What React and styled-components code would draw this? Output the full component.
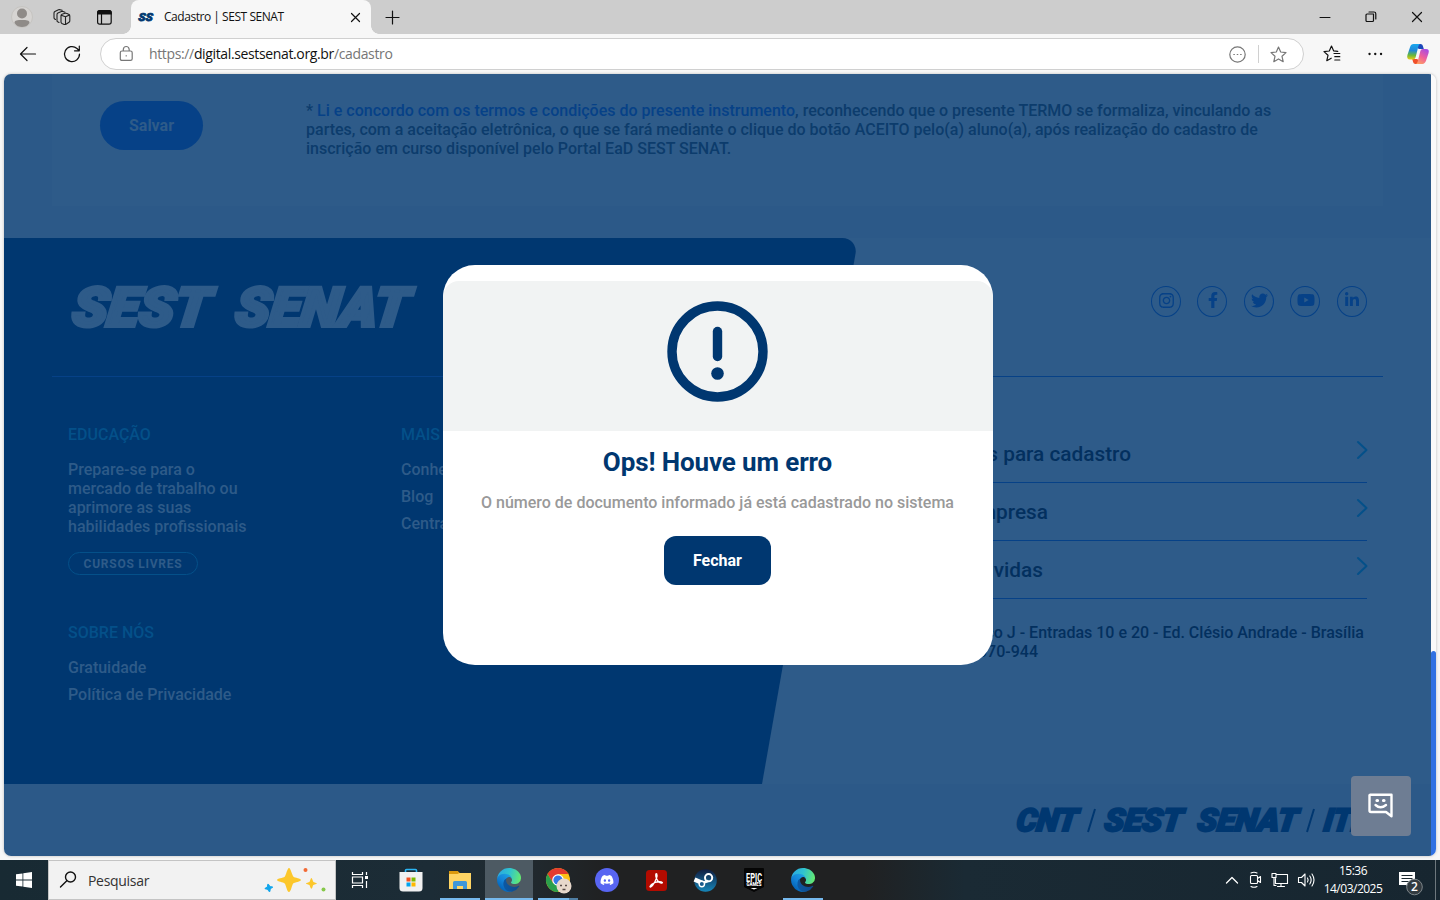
import React from "react";
import styled, { createGlobalStyle } from "styled-components";
import { FaInstagram, FaFacebookF, FaTwitter, FaYoutube, FaLinkedinIn, FaDiscord, FaSteamSymbol } from "react-icons/fa";

const Global = createGlobalStyle`
  * { box-sizing: border-box; }
  body { margin: 0; background: #f7f7f7; overflow: hidden; }
  svg { display: block; flex: none; overflow: visible; }
`;

const ui = `"Open Sans", "Noto Sans", sans-serif`;

const Screen = styled.div`
  width: 1440px;
  height: 900px;
  display: flex;
  flex-direction: column;
  overflow: hidden;
  background: #f7f7f7;
  font-family: Roboto, sans-serif;
`;

/* ---------- browser chrome ---------- */
const TabStrip = styled.header`
  height: 34px;
  background: #cdcdcd;
  display: flex;
  align-items: center;
`;
const StripTools = styled.div`
  width: 131px;
  padding-left: 11px;
  display: flex;
  align-items: center;
  gap: 20px;
  svg:last-child { margin-left: 6px; }
`;
const Tab = styled.div`
  position: relative;
  width: 240px;
  height: 34px;
  padding: 0 9px 0 7px;
  border-radius: 8px 8px 0 0;
  background: #f7f7f7;
  display: flex;
  align-items: center;
  &::before, &::after {
    content: "";
    position: absolute;
    bottom: 0;
    width: 8px;
    height: 8px;
  }
  &::before { left: -8px; background: radial-gradient(circle at 0 0, #cdcdcd 7.5px, #f7f7f7 8px); }
  &::after { right: -8px; background: radial-gradient(circle at 100% 0, #cdcdcd 7.5px, #f7f7f7 8px); }
`;
const TabTitle = styled.span`
  flex: 1;
  margin-left: 9px;
  font: 400 12px/18px ${ui};
  letter-spacing: -0.46px;
  white-space: nowrap;
  color: #111;
`;
const NewTab = styled.div`
  flex: 1;
  padding-left: 14px;
`;
const WindowButtons = styled.div`
  display: flex;
  gap: 34px;
  padding-right: 17px;
`;
const Toolbar = styled.div`
  height: 40px;
  display: flex;
  align-items: center;
  padding: 0 11px 0 19px;
`;
const NavButtons = styled.div`
  width: 81px;
  display: flex;
  gap: 26px;
`;
const AddressBar = styled.div`
  width: 1204px;
  height: 32px;
  border: 1px solid #d0d0d0;
  border-radius: 16px;
  background: #fff;
  display: flex;
  align-items: center;
  padding: 0 16px 0 18px;
`;
const Url = styled.span`
  flex: 1;
  margin-left: 15px;
  font: 400 14px/20px ${ui};
  letter-spacing: -0.36px;
  color: #767676;
  b { font-weight: 400; color: #111; }
`;
const Separator = styled.i`
  width: 1px;
  height: 18px;
  background: #d0d0d0;
  margin: 0 11px 0 12px;
`;
const ToolbarEnd = styled.div`
  flex: 1;
  display: flex;
  align-items: center;
  justify-content: flex-end;
  gap: 27px;
  svg:last-child { margin-left: -3px; }
`;

/* ---------- web page ---------- */
const Viewport = styled.main`
  position: relative;
  width: 1432px;
  height: 782px;
  margin: 0 4px;
  border-radius: 7px;
  overflow: hidden;
  display: flex;
  box-shadow: 0 0 3px rgba(0, 0, 0, 0.25);
`;
const Page = styled.div`
  width: 1427px;
  background: #2c5988;
  display: flex;
  flex-direction: column;
`;
const Scrollbar = styled.div`
  width: 5px;
  background: #fafafa;
  display: flex;
  flex-direction: column;
  justify-content: flex-end;
`;
const Thumb = styled.div`
  height: 205px;
  border-radius: 3px 3px 0 0;
  background: #3071e2;
`;
const FormCard = styled.section`
  width: 1331px;
  height: 132px;
  margin: 0 0 32px 48px;
  padding: 27px 0 0 48px;
  background: #2e5b89;
  display: flex;
  align-items: flex-start;
`;
const SaveButton = styled.button`
  width: 103px;
  height: 49px;
  border: 0;
  border-radius: 25px;
  background: #064187;
  color: #2e5b89;
  font: 700 16px/19px Roboto, sans-serif;
`;
const Terms = styled.p`
  margin: 0 0 0 103px;
  font-weight: 500;
  font-size: 16px;
  line-height: 19px;
  letter-spacing: 0.005px;
  color: #0c3c6c;
  white-space: nowrap;
  a { color: #064187; }
`;
const Footer = styled.footer`
  position: relative;
  height: 546px;
  background: #2e5b89;
  overflow: hidden;
  display: flex;
  flex-direction: column;
  padding: 0 48px;
  &::before {
    content: "";
    position: absolute;
    left: -200px;
    top: 0;
    width: 958px;
    height: 546px;
    background: #003770;
    border-top-right-radius: 16px;
    transform: skewX(-10deg);
    transform-origin: 100% 100%;
  }
  > * { position: relative; }
`;
const FooterTop = styled.div`
  height: 139px;
  padding: 48px 16px 0;
  border-bottom: 1px solid #064187;
  display: flex;
  justify-content: space-between;
`;
const Socials = styled.div`
  display: flex;
  gap: 16.4px;
`;
const Social = styled.span`
  width: 30.2px;
  height: 31px;
  border: 1px solid #064187;
  border-radius: 50%;
  display: flex;
  justify-content: center;
  padding: ${(p) => p.$top || 5}px 0 0 1px;
  color: #064187;
`;
const FooterBody = styled.div`
  display: flex;
  padding-top: 48px;
`;
const LinkColumn = styled.nav`
  width: ${(p) => p.$w}px;
  padding-left: 16px;
  display: flex;
  flex-direction: column;
  align-items: flex-start;
  font-weight: 500;
  font-size: 16px;
  line-height: 19px;
  color: #2e5b89;
  white-space: nowrap;
`;
const Heading = styled.h4`
  margin: ${(p) => p.$mt || 0}px 0 16px;
  font: inherit;
  color: #045089;
`;
const FooterLink = styled.a`
  margin-bottom: 8px;
`;
const Chip = styled.span`
  width: 130px;
  height: 23px;
  margin-top: 8px;
  border: 1px solid #045089;
  border-radius: 12px;
  font-weight: 700;
  font-size: 12px;
  line-height: 22px;
  letter-spacing: 0.75px;
  text-align: center;
`;
const Accordion = styled.div`
  width: 649px;
  font-weight: 500;
  color: #03305f;
`;
const AccordionRow = styled.div`
  height: 58px;
  border-bottom: 1px solid #064187;
  display: flex;
  align-items: flex-end;
  justify-content: space-between;
  padding-bottom: 16px;
  font-size: 20.800px;
  line-height: 24px;
  svg { margin: 0 -1px 6px 0; }
`;
const RightEdge = styled.span`
  display: block;
  width: ${(p) => p.$w}px;
  text-align: right;
  white-space: nowrap;
`;
const Address = styled.address`
  margin-top: 24px;
  font-style: normal;
  font-size: 16px;
  line-height: 19px;
`;
const BrandBar = styled.div`
  height: 72px;
  padding: 20px 0 0 1009px;
`;
const ChatButton = styled.button`
  position: absolute;
  right: 25px;
  bottom: 20px;
  width: 60px;
  height: 60px;
  padding: 0;
  border: 0;
  border-radius: 4px;
  background: #6e7d93;
  display: grid;
  place-items: center;
`;

/* ---------- dialog ---------- */
const Dialog = styled.div`
  position: absolute;
  left: 439px;
  top: 191px;
  width: 550px;
  height: 400px;
  padding-top: 16px;
  border-radius: 32px;
  background: #fff;
  overflow: hidden;
  display: flex;
  flex-direction: column;
`;
const DialogBanner = styled.div`
  height: 150px;
  padding: 20px 1px 0 0;
  border-radius: 16px 16px 0 0;
  background: #f1f3f3;
  display: flex;
  justify-content: center;
`;
const DialogBody = styled.div`
  width: 549px;
  display: flex;
  flex-direction: column;
  align-items: center;
`;
const DialogTitle = styled.h2`
  margin: 15px 0 0;
  font: 700 26px/32px Roboto, sans-serif;
  letter-spacing: -0.12px;
  color: #003770;
`;
const DialogText = styled.p`
  margin: 15px 0 0;
  font: 500 16px/19px Roboto, sans-serif;
  color: #999;
`;
const DialogButton = styled.button`
  width: 107px;
  height: 49px;
  margin-top: 24px;
  border: 0;
  border-radius: 12px;
  background: #003770;
  color: #fff;
  font: 700 16px/19px Roboto, sans-serif;
`;

/* ---------- taskbar ---------- */
const Taskbar = styled.div`
  height: 40px;
  margin-top: 4px;
  background: linear-gradient(90deg, #182a33 0, #1c2c36 30%, #202a30 36%, #202122 42%, #202122 60%, #1a2a34 67%, #172630 100%);
  display: flex;
  color: #fff;
`;
const Cell = styled.div`
  width: ${(p) => p.$w || 49}px;
  height: 40px;
  padding-right: ${(p) => (p.$w ? 0 : 1)}px;
  display: flex;
  align-items: center;
  justify-content: center;
  background:
    ${(p) => {
      const line = p.$split ? "linear-gradient(90deg,#76b9ed 31px,#4f7ea3 31px)" : p.$open ? "linear-gradient(#76b9ed,#76b9ed)" : "linear-gradient(transparent,transparent)";
      return p.$active
        ? `${line} 0 38px / 48px 2px no-repeat, linear-gradient(#4d5a63,#4d5a63) 0 0 / 48px 40px no-repeat`
        : `${line} 4px 38px / 40px 2px no-repeat`;
    }};
`;
const SearchBox = styled.div`
  width: 288px;
  height: 40px;
  border: 1px solid #c4c4c4;
  background: #f2f2f2;
  display: flex;
  align-items: center;
  padding: 0 9px 0 10px;
  font: 400 14px/20px ${ui};
  color: #333;
  span { flex: 1; margin: 2px 0 0 11px; letter-spacing: -0.3px; }
`;
const Tray = styled.div`
  flex: 1;
  display: flex;
  align-items: center;
  justify-content: flex-end;
`;
const TrayIcons = styled.div`
  display: flex;
  align-items: center;
  gap: 8px;
`;
const Clock = styled.div`
  width: 76px;
  text-align: center;
  font: 400 12px/18px ${ui};
  letter-spacing: -0.5px;
`;
const Notifications = styled.div`
  padding: 2px 11px 0 7px;
`;
const DesktopEdge = styled.i`
  width: 5px;
  height: 40px;
  border-left: 1px solid #6d777d;
`;

const Stroke = ({ w, h = w, d, c = "#111", sw = 1.2, vb, ...rest }) => (
  <svg width={w} height={h} viewBox={vb || `0 0 ${w} ${h}`} fill="none" stroke={c} strokeWidth={sw} strokeLinecap="round" strokeLinejoin="round" {...rest}>
    <path d={d} />
  </svg>
);

function LogoWord({ x, y, w, size, children, color, stroke = 0 }) {
  return (
    <text
      transform={`translate(${x} ${y}) skewX(-7)`}
      fontFamily="Roboto, sans-serif"
      fontStyle="italic"
      fontWeight="900"
      fontSize={size}
      textLength={w}
      lengthAdjust="spacingAndGlyphs"
      fill={color}
      stroke={color}
      strokeWidth={stroke}
    >
      {children}
    </text>
  );
}

const EdgeIcon = ({ id }) => (
  <svg width="24" height="24" viewBox="0 0 256 256">
    <defs>
      <linearGradient id={id + "a"} x1="60" y1="177" x2="241" y2="177" gradientUnits="userSpaceOnUse"><stop stopColor="#0c59a4" /><stop offset="1" stopColor="#114a8b" /></linearGradient>
      <linearGradient id={id + "b"} x1="150" y1="100" x2="45" y2="225" gradientUnits="userSpaceOnUse"><stop stopColor="#1b9de2" /><stop offset=".5" stopColor="#1383d8" /><stop offset="1" stopColor="#0464b8" /></linearGradient>
      <linearGradient id={id + "c"} x1="10" y1="60" x2="250" y2="130" gradientUnits="userSpaceOnUse"><stop stopColor="#2aa9e0" /><stop offset=".45" stopColor="#2fc3d0" /><stop offset="1" stopColor="#66eb6e" /></linearGradient>
    </defs>
    <path fill={`url(#${id}a)`} d="M231 190.5c-3.4 1.8-6.9 3.4-10.5 4.7a101.5 101.5 0 0 1-35.9 6.5c-47.3 0-88.5-32.5-88.5-74.3 0-11.4 6.4-21.9 16.4-27.3-42.8 1.8-53.8 46.4-53.8 72.5 0 73.9 68.1 81.4 82.8 81.4 7.9 0 19.8-2.3 27-4.6l1.3-.4a128.3 128.3 0 0 0 66.6-52.8 4 4 0 0 0-5.4-5.7z" />
    <path fill={`url(#${id}b)`} d="M105.7 241.4a79.2 79.2 0 0 1-22.7-21.3 80.7 80.7 0 0 1 29.5-120c3.1-1.5 8.5-4.1 15.6-4 10.1.1 20 5 26.2 13.2a32.5 32.5 0 0 1 6.3 18.9c0-.2 24.5-79.6-80-79.6-43.9 0-80 41.7-80 78.2 0 19.3 4.5 38.4 12.6 55.6a128 128 0 0 0 156.4 67.1 75.5 75.5 0 0 1-63.9-8.1z" />
    <path fill={`url(#${id}c)`} d="M152.3 148.9c-.9 1-3.4 2.5-3.4 5.7 0 2.6 1.7 5.2 4.8 7.3 14.4 10.1 41.7 8.7 41.8 8.7 10.7 0 21.2-2.9 30.5-8.4a61.9 61.9 0 0 0 30.4-53.4c.3-22.4-8-37.3-11.3-43.9C223.9 23.9 177.7 0 128 0A128 128 0 0 0 0 126.2c.5-36.5 36.8-66 80-66 3.5 0 23.5.3 42 10.1 16.4 8.6 25 19 30.9 29.2 6.2 10.7 7.3 24.2 7.3 29.5 0 5.4-2.7 13.3-7.9 19.9z" />
  </svg>
);

const CopilotIcon = () => (
  <svg width="22" height="21" viewBox="0 0 22 21">
    <defs>
      <linearGradient id="cpl" x1="5" y1="0" x2="4" y2="16" gradientUnits="userSpaceOnUse"><stop stopColor="#19a7ee" /><stop offset=".4" stopColor="#2088d8" /><stop offset=".7" stopColor="#68b83c" /><stop offset="1" stopColor="#f8cd12" /></linearGradient>
      <linearGradient id="cpr" x1="19" y1="5" x2="10" y2="20" gradientUnits="userSpaceOnUse"><stop stopColor="#a64be5" /><stop offset=".5" stopColor="#f0609a" /><stop offset="1" stopColor="#ffa75c" /></linearGradient>
    </defs>
    <path d="M11 0h2.500c1.300 0 2 .8 2.400 2l.9 3h-4.500c-1.200 0-2-1.500-2.500-3z" fill="#1c48ba" />
    <path d="M11 20H8.500c-1.300 0-2-.8-2.400-2l-.9-3h4.500c1.200 0 2 1.500 2.500 3z" fill="#f04f2b" />
    <path d="M13 0H6.600C4.800 0 3.700 1.200 3 3.200L.5 10.700C-.4 13.500.5 15.500 3 15.500h3c1.400 0 2.200-1 2.700-2.500L11.200 3C11.700 1.300 12 .4 13 0z" fill="url(#cpl)" />
    <path d="M9 20h6.400c1.800 0 2.900-1.200 3.600-3.200l2.500-7.500C22.400 6.500 21.500 5 19 5h-3c-1.400 0-2.200.8-2.700 2.300L10.800 17c-.5 1.700-.8 2.600-1.800 3z" fill="url(#cpr)" />
  </svg>
);

const star = "M8.500 1l2.200 5 5.300.6-4 3.700 1.200 5.400-4.700-2.800-4.700 2.800L5 10.300 1 6.600 6.300 6z";
const sparkle = "M12 0c1.700 0 3.200 7.500 4.500 8.700S24 10.300 24 12s-6.500 2.200-7.800 3.500S14 24 12 24s-3-7-4.300-8.500S0 13.700 0 12s6.400-2 7.700-3.300S10.300 0 12 0z";

export default function App() {
  return (
    <Screen>
      <Global />
      <TabStrip>
        <StripTools>
          <svg width="22" height="22" viewBox="0 0 22 22">
            <circle cx="11" cy="11" r="10.500" fill="#d6d4d2" stroke="#c6c4c1" />
            <circle cx="11" cy="7.500" r="5" fill="#8f8b88" />
            <path d="M3.500 17c0-3 3-3 7.500-3s7.500 0 7.500 3c-2 3-4.500 4-7.500 4s-5.500-1-7.500-4z" fill="#8f8b88" />
          </svg>
          <svg width="18" height="18" viewBox="0 0 18 18" fill="none" stroke="#222" strokeWidth="1.100" strokeLinejoin="round" strokeLinecap="round">
            <path d="M8 7.500q0-1 1-1.300l3-.9q1-.3 2 .2l2 1q.8.4.8 1.400v4.800q0 1-.8 1.500l-3 2q-.9.6-1.800.2l-2.300-1q-.9-.5-.9-1.400zM8.200 7.300l4.300 1.500v7.500M12.500 8.800l4-1.900" />
            <path d="M6 14.500l-1.300-.7q-.7-.4-.7-1.400V6.500q0-1 .9-1.500l3.500-1.500q.8-.3 1.600 0l2 .7" />
            <path d="M2.500 11.500l-.8-.5q-.7-.4-.7-1.400V5q0-1 .9-1.500l3.600-1.700q.8-.3 1.600-.1l2 .6" />
          </svg>
          <svg width="15" height="15" viewBox="0 0 15 15" fill="none" stroke="#111" strokeWidth="1.200">
            <rect x=".6" y=".6" width="13.600" height="13.600" rx="2.200" />
            <path d="M.6 4V3Q.6.6 3 .6h9Q14.200.6 14.200 3v1z" fill="#111" />
            <path d="M4.500 4v10" />
          </svg>
        </StripTools>
        <Tab>
          <svg width="17" height="10" viewBox="0 0 17 10">
            <LogoWord x={0} y={9} w={14.5} size={11} color="#003770" stroke={0.7}>SS</LogoWord>
          </svg>
          <TabTitle>Cadastro | SEST SENAT</TabTitle>
          <Stroke w={13} d="M2.500 2.500l8 8M10.500 2.500l-8 8" />
        </Tab>
        <NewTab><Stroke w={15} d="M7.500 1v13M1 7.500h13" /></NewTab>
        <WindowButtons>
          <Stroke w={12} d="M1 6.500h10" sw={1} />
          <Stroke w={12} d="M3 3h5.500v6.500a1 1 0 0 1-1 1h-5.500a1 1 0 0 1-1-1v-5.500a1 1 0 0 1 1-1zM4 1h5a1.800 1.800 0 0 1 1.800 1.800V8" />
          <Stroke w={12} d="M1.500 1.500l9 9M10.500 1.500l-9 9" />
        </WindowButtons>
      </TabStrip>
      <Toolbar>
        <NavButtons>
          <Stroke w={18} d="M16.500 9H1.500M8 2.500L1.500 9 8 15.500" />
          <Stroke w={18} d="M16.500 9A7.500 7.500 0 1 1 14 3.500L16 5.500M16.300 1v4.800h-4.800" />
        </NavButtons>
        <AddressBar>
          <Stroke w={15} h={16} c="#777" d="M3 5h8.500q1.700 0 1.700 1.700v6q0 1.700-1.700 1.700H3q-1.700 0-1.700-1.700v-6q0-1.700 1.700-1.700zM4.300 5V3.500Q4.500.5 7.200.5T10.200 3.500v1.500M7.200 9.700v.2" />
          <Url>https://<b>digital.sestsenat.org.br</b>/cadastro</Url>
          <Stroke w={17} c="#777" d="M8.500.8a7.700 7.700 0 1 1 0 15.400 7.700 7.700 0 1 1 0-15.400z M4.800 8.500h.6M8.200 8.500h.6M11.600 8.500h.6" />
          <Separator />
          <Stroke w={17} c="#777" d={star} />
        </AddressBar>
        <ToolbarEnd>
          <Stroke w={18} d="M16.800 8.500h-5.800M16.800 11.700h-5M16.800 15h-5M14.800 6.300l-4.100-.4L8.500 1 6.300 6 1 6.600l4 3.700-1.200 5.400 4.400-2.500" />
          <Stroke w={15} h={4} sw={2.300} d="M1.500 2h.1M7.200 2h.1M13 2h.1" />
          <CopilotIcon />
        </ToolbarEnd>
      </Toolbar>

      <Viewport>
        <Page>
          <FormCard>
            <SaveButton>Salvar</SaveButton>
            <Terms>
              * <a>Li e concordo com os termos e condições do presente instrumento</a>, reconhecendo que o presente TERMO se formaliza, vinculando as<br />
              partes, com a aceitação eletrônica, o que se fará mediante o clique do botão ACEITO pelo(a) aluno(a), após realização do cadastro de<br />
              inscrição em curso disponível pelo Portal EaD SEST SENAT.
            </Terms>
          </FormCard>
          <Footer>
            <FooterTop>
              <svg width="350" height="44" viewBox="0 0 350 44">
                <LogoWord x={3} y={40} w={137} size={54} color="#2e5b89" stroke={4}>SEST</LogoWord>
                <LogoWord x={166} y={40} w={173} size={54} color="#2e5b89" stroke={4}>SENAT</LogoWord>
              </svg>
              <Socials>
                <Social><FaInstagram size={17} /></Social>
                <Social><FaFacebookF size={16} /></Social>
                <Social><FaTwitter size={17} /></Social>
                <Social $top={4}><FaYoutube size={18} /></Social>
                <Social><FaLinkedinIn size={16} /></Social>
              </Socials>
            </FooterTop>
            <FooterBody>
              <LinkColumn $w={333}>
                <Heading>EDUCAÇÃO</Heading>
                <FooterLink>Prepare-se para o<br />mercado de trabalho ou<br />aprimore as suas<br />habilidades profissionais</FooterLink>
                <Chip>CURSOS LIVRES</Chip>
                <Heading $mt={48}>SOBRE NÓS</Heading>
                <FooterLink>Gratuidade</FooterLink>
                <FooterLink>Política de Privacidade</FooterLink>
              </LinkColumn>
              <LinkColumn $w={333}>
                <Heading>MAIS</Heading>
                <FooterLink>Conheça</FooterLink>
                <FooterLink>Blog</FooterLink>
                <FooterLink>Central</FooterLink>
              </LinkColumn>
              <Accordion>
                {[["Documentos para cadastro", 413], ["Sou empresa", 330], ["Dúvidas", 325]].map(([label, w]) => (
                  <AccordionRow key={label}>
                    <RightEdge $w={w}>{label}</RightEdge>
                    <Stroke w={12} h={20} c="#045089" sw={2} d="M2 2l8.500 8L2 18" />
                  </AccordionRow>
                ))}
                <Address>
                  <RightEdge $w={646}>SAUS Quadra 1 - Bloco J - Entradas 10 e 20 - Ed. Clésio Andrade - Brasília</RightEdge>
                  <RightEdge $w={320}>DF - CEP: 70070-944</RightEdge>
                </Address>
              </Accordion>
            </FooterBody>
          </Footer>
          <BrandBar>
            <svg width="370" height="34" viewBox="0 0 370 34">
              <LogoWord x={2.500} y={27} w={61} size={31.500} color="#003770" stroke={2.200}>CNT</LogoWord>
              <path d="M75 28l7-23M294 28l7-23" stroke="#003770" strokeWidth="2" />
              <LogoWord x={90.500} y={27} w={78} size={31.500} color="#003770" stroke={2.200}>SEST</LogoWord>
              <LogoWord x={183.500} y={27} w={100} size={31.500} color="#003770" stroke={2.200}>SENAT</LogoWord>
              <LogoWord x={310} y={27} w={44} size={31.500} color="#003770" stroke={2.200}>ITL</LogoWord>
            </svg>
          </BrandBar>
        </Page>
        <Scrollbar><Thumb /></Scrollbar>
        <ChatButton>
          <svg width="26" height="26" viewBox="0 0 26 26" fill="none" stroke="#fff" strokeWidth="2.400" strokeLinecap="round" strokeLinejoin="round">
            <path d="M2 1.800h21.500v21.500l-5.500-4.300H3a1.500 1.500 0 0 1-1.500-1.500V2z" />
            <path d="M7.500 12q5 4.400 10.500 0" />
            <path d="M9 7.500h.5M15.500 7.500h.5" strokeWidth="3.200" />
          </svg>
        </ChatButton>
        <Dialog>
          <DialogBanner>
            <svg width="101" height="101" viewBox="0 0 101 101" stroke="#003770" fill="none" strokeLinecap="round">
              <circle cx="50.500" cy="50.500" r="45.500" strokeWidth="9.400" />
              <path d="M50.500 30.500v25" strokeWidth="9.400" />
              <circle cx="50.500" cy="72.500" r="6.300" fill="#003770" stroke="none" />
            </svg>
          </DialogBanner>
          <DialogBody>
            <DialogTitle>Ops! Houve um erro</DialogTitle>
            <DialogText>O número de documento informado já está cadastrado no sistema</DialogText>
            <DialogButton>Fechar</DialogButton>
          </DialogBody>
        </Dialog>
      </Viewport>

      <Taskbar>
        <Cell $w={48}>
          <svg width="16" height="16" viewBox="0 0 16 16" fill="#fff"><path d="M0 2.300l6.500-.9v6.200H0zM7.300 1.300L16 0v7.600H7.300zM0 8.400h6.500v6.200L0 13.700zM7.300 8.400H16V16l-8.700-1.300z" /></svg>
        </Cell>
        <SearchBox>
          <Stroke w={18} d="M11.500 1a5 5 0 1 1 0 10 5 5 0 1 1 0-10zM7.800 9.700L1.500 16" sw={1.400} />
          <span>Pesquisar</span>
          <svg width="61" height="26" viewBox="0 0 61 26">
            <path transform="translate(12 1)" fill="#fcc72b" d={sparkle} />
            <path transform="translate(41 11) scale(.45)" fill="#fcc72b" d={sparkle} />
            <path transform="translate(0 17) rotate(-12 4 4) scale(.32)" fill="#10a5ec" stroke="#10a5ec" strokeWidth="3" d={sparkle} />
            <circle cx="40.500" cy="3" r="2" fill="#f26a35" />
            <circle cx="58.500" cy="22.500" r="2" fill="#86c84a" />
          </svg>
        </SearchBox>
        <Cell>
          <svg width="18" height="16" viewBox="0 0 18 16" fill="none" stroke="#fff" strokeWidth="1.200"><path d="M1.500 0v2.500h10V0M1.500 16v-2.500h10V16M1.500 5h10v6h-10zM15.500 0v3M15.500 9v7" /><path d="M14 4h3v3h-3z" fill="#fff" stroke="none" /></svg>
        </Cell>
        <Cell $w={51}>
          <svg width="24" height="24" viewBox="0 0 24 24"><path d="M6.500 5V2.500q0-1 1-1h9q1 0 1 1V5" fill="none" stroke="#2bb6f5" strokeWidth="1.600" /><path d="M.5 4h23v16q0 3.500-3.500 3.500H4Q.5 23.500.5 20z" fill="#f1f1f1" /><path d="M7.500 9.500h4v4h-4z" fill="#f25022" /><path d="M12.500 9.500h4v4h-4z" fill="#7fba00" /><path d="M7.500 14.500h4v4h-4z" fill="#00a4ef" /><path d="M12.500 14.500h4v4h-4z" fill="#ffb900" /></svg>
        </Cell>
        <Cell $open>
          <svg width="22" height="18" viewBox="0 0 22 18"><path d="M0 0h8.500l2 2H22v16H0z" fill="#ffd564" /><path d="M0 0h8.500l2 2-2 1H0z" fill="#dc9a0e" /><path d="M4 18v-6.500Q4 10 5.500 10h11q1.500 0 1.500 1.500V18h-4v-3H8v3z" fill="#3f97d8" /></svg>
        </Cell>
        <Cell $open $active><EdgeIcon id="e1" /></Cell>
        <Cell $open $split>
          <svg width="26" height="26" viewBox="0 0 26 26">
            <circle cx="13" cy="13" r="12" fill="#fbc116" />
            <path d="M2.600 7A12 12 0 0 1 23.400 7H13L8 16z" fill="#e33b2e" />
            <path d="M2.600 7A12 12 0 0 0 13 25L18 16H8z" fill="#2b9f4b" />
            <circle cx="13" cy="13" r="5.800" fill="#fff" /><circle cx="13" cy="13" r="4.600" fill="#3478e5" />
            <circle cx="19" cy="19" r="7.500" fill="#e7d8cb" /><path d="M15 18.500h2M20 18.500h2M17.500 22.500h3" stroke="#594c48" strokeWidth="1.300" />
          </svg>
        </Cell>
        <Cell>
          <svg width="24" height="24" viewBox="0 0 24 24"><circle cx="12" cy="12" r="12" fill="#5865f2" /><FaDiscord x="5" y="5" size={14} color="#fff" /></svg>
        </Cell>
        <Cell>
          <svg width="21" height="21" viewBox="0 0 21 21"><rect width="21" height="21" rx="3.500" fill="#b30b00" /><path d="M4 16.500c1-3 7-5.500 11.500-4.500 3 1-2 3-5-3.500-1.500-4-.5-5.500.3-4.500 1 1.500-.8 7-4 11-1.500 2-3 2.500-2.800 1.500z" fill="none" stroke="#fff" strokeWidth="1.300" /></svg>
        </Cell>
        <Cell>
          <svg width="23" height="23" viewBox="0 0 23 23"><defs><linearGradient id="stm" x2="0" y2="1"><stop stopColor="#111d40" /><stop offset="1" stopColor="#1686b9" /></linearGradient></defs><circle cx="11.500" cy="11.500" r="11.300" fill="url(#stm)" /><circle cx="14.600" cy="8.700" r="3.600" fill="none" stroke="#fff" strokeWidth="2" /><path d="M.5 10.500L8.500 14" stroke="#fff" strokeWidth="4.500" /><path d="M7 14.500L14 12" stroke="#fff" strokeWidth="2.500" /><circle cx="7.800" cy="15" r="2.700" fill="#1b5b8c" stroke="#fff" strokeWidth="1.400" /></svg>
        </Cell>
        <Cell>
          <svg width="22" height="24" viewBox="0 0 22 24"><path d="M1 1q0-1 1-1h18q1 0 1 1v18L11 24 1 19z" fill="#050505" /><text x="3" y="13.500" fontFamily="Roboto" fontWeight="700" fontSize="13.500" textLength="16" lengthAdjust="spacingAndGlyphs" fill="#fff">EPIC</text><text x="3.500" y="17.800" fontFamily="Roboto" fontWeight="900" fontSize="4.500" textLength="15" lengthAdjust="spacingAndGlyphs" fill="#fff">GAMES</text><path d="M7.500 20h7L11 21.500z" fill="#fff" /></svg>
        </Cell>
        <Cell $open><EdgeIcon id="e2" /></Cell>
        <Tray>
          <TrayIcons>
            <Stroke w={14} h={10} c="#fff" sw={1.300} d="M1.500 8L7 2.500 12.500 8" />
            <Stroke w={16} h={18} c="#fff" sw={1.100} d="M4.500 4.500h5q1 0 1 1v6q0 1-1 1h-5q-1 0-1-1v-6q0-1 1-1zM10.500 7.500l3-2v6l-3-2M4 2q3-1.600 6 0M4 15.500q3 1.600 6 0" />
            <Stroke w={18} h={16} c="#fff" sw={1.100} d="M5 2.500h11.500v9H4.500v-5M1 1.500h4v4H1zM3 5.500v8h2M10 11.500v3M6.500 14.500h7" />
            <Stroke w={18} h={16} c="#fff" sw={1.100} d="M1.500 5.500h3L8 2v12l-3.500-3.500h-3zM10.500 6q1.300 2 0 4M12.800 4q2.700 4 0 8M15 2q4 6 0 12" />
          </TrayIcons>
          <Clock>15:36<br />14/03/2025</Clock>
          <Notifications>
            <svg width="26" height="26" viewBox="0 0 26 26">
              <path d="M1 4h16v13h-6v3l-3-3H1z" fill="#fff" /><path d="M3.500 7.500h11M3.500 10.500h11M3.500 13.500h7" stroke="#1a2830" strokeWidth="1.200" />
              <circle cx="16.500" cy="19" r="7.800" fill="#333b40" stroke="#7d8589" /><text x="16.500" y="23.300" textAnchor="middle" fontFamily="Open Sans" fontWeight="600" fontSize="12" fill="#fff">2</text>
            </svg>
          </Notifications>
          <DesktopEdge />
        </Tray>
      </Taskbar>
    </Screen>
  );
}
